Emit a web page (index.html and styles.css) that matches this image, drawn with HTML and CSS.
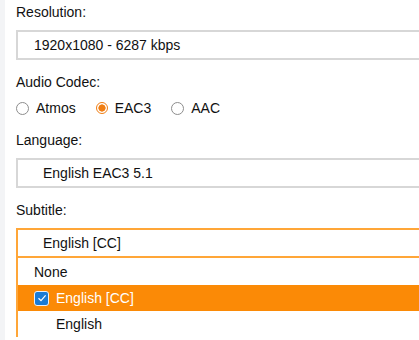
FILE: index.html
```html
<!DOCTYPE html>
<html lang="en">

<head>
	<meta charset="UTF-8">
	<meta name="viewport" content="width=device-width, initial-scale=1.0">
	<title>Stream settings</title>
	<link rel="stylesheet" href="styles.css">
</head>

<body>
	<div class="side"></div>
	<div class="panel">
		<div class="field">
			<div class="label">Resolution:</div>
			<div class="box">1920x1080 - 6287 kbps</div>
		</div>
		<div class="field">
			<div class="label">Audio Codec:</div>
			<div class="radios">
				<span class="radio"><span class="dot"></span>Atmos</span>
				<span class="radio checked"><span class="dot"></span>EAC3</span>
				<span class="radio"><span class="dot"></span>AAC</span>
			</div>
		</div>
		<div class="field">
			<div class="label">Language:</div>
			<div class="box wide">English EAC3 5.1</div>
		</div>
		<div class="field">
			<div class="label">Subtitle:</div>
			<div class="box wide open">English [CC]</div>
			<div class="options">
				<div class="option">None</div>
				<div class="option selected">
					<span class="check">
						<svg width="10" height="10" viewBox="0 0 10 10">
							<path d="M1.5 5.2 L4 7.6 L8.6 2.4" fill="none" stroke="#fff" stroke-width="1.2" />
						</svg>
					</span>English [CC]
				</div>
				<div class="option sub">English</div>
			</div>
		</div>
	</div>
</body>

</html>
```

FILE: styles.css
```css
html,
body {
	margin: 0;
	height: 100%;
	overflow: hidden;
}

body {
	display: flex;
	font-family: "Liberation Sans", Arial, sans-serif;
	font-size: 14px;
	color: #111;
	background: #fff;
}

.side {
	width: 5px;
	flex-shrink: 0;
	background: #f3f4f6;
}

.panel {
	flex: 1;
	min-width: 0;
	padding: 4px 0 0 11px;
	display: flex;
	flex-direction: column;
	gap: 14px;
}

.field {
	display: flex;
	flex-direction: column;
}

.label {
	line-height: 16px;
	margin-bottom: 10px;
}

.box {
	height: 26px;
	line-height: 26px;
	border: 2px solid #d7d7d7;
	border-right: none;
	padding-left: 16px;
}

.box.wide {
	padding-left: 25px;
}

.box.open {
	border-color: #ffa638;
}

.radios {
	display: flex;
	gap: 20px;
	line-height: 16px;
	margin-bottom: 2px;
}

.radio {
	display: flex;
	align-items: center;
	gap: 7px;
}

.dot {
	width: 11px;
	height: 11px;
	border: 1px solid #8d8d8d;
	border-radius: 50%;
	box-sizing: content-box;
}

.radio.checked .dot {
	width: 10px;
	height: 10px;
	border: 1.5px solid #f07d12;
	background: radial-gradient(circle, #f07d12 0 3.3px, #fff 3.9px);
}

.options {
	border-left: 2px solid #ffa638;
	background: #fff;
	padding-top: 1px;
}

.option {
	height: 26px;
	line-height: 26px;
	padding-left: 16px;
	display: flex;
	align-items: center;
}

.option.selected {
	background: #fb8a06;
	color: #fff;
	padding-left: 16px;
	gap: 7px;
}

.option.sub {
	padding-left: 38px;
}

.check {
	width: 13px;
	height: 13px;
	border-radius: 3px;
	background: #1a7bd6;
	border: 1px solid #e9f1fb;
	display: flex;
	align-items: center;
	justify-content: center;
}
```
